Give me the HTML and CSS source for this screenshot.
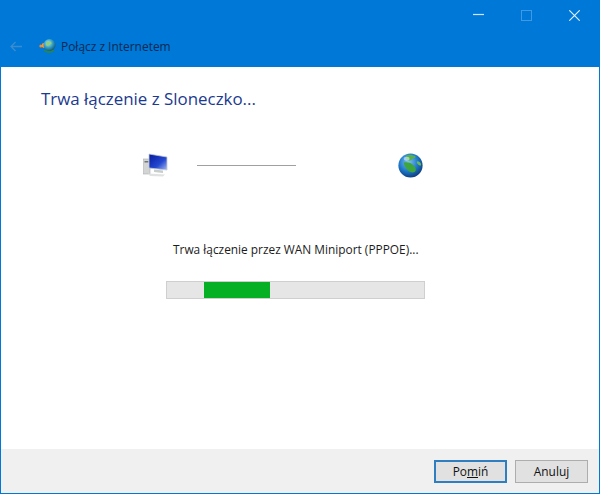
FILE: index.html
```html
<!DOCTYPE html>
<html lang="pl">
<head>
<meta charset="utf-8">
<title>Połącz z Internetem</title>
<link rel="stylesheet" href="styles.css">
</head>
<body>
<div class="window">
  <header class="titlebar">
    <div class="controls">
      <span class="ctl"><svg width="11" height="11" viewBox="0 0 11 11"><path d="M0 4.500H11" stroke="#cfe6f8" stroke-width="1.200"/></svg></span>
      <span class="ctl"><svg width="11" height="11" viewBox="0 0 11 11"><rect x=".5" y=".5" width="10" height="10" fill="none" stroke="#3f9ae3"/></svg></span>
      <span class="ctl"><svg width="11" height="11" viewBox="0 0 11 11"><path d="M.3.3 10.700 10.700M10.700.3.3 10.700" stroke="#e3f1fc" stroke-width="1.100"/></svg></span>
    </div>
    <div class="nav">
      <svg class="back" width="12" height="11" viewBox="0 0 12 11"><path d="M5.500 1 1 5.500 5.500 10M1 5.500H12" fill="none" stroke="#3a8ccf" stroke-width="1.300"/></svg>
      <svg class="appicon" width="17" height="17" viewBox="0 0 17 17">
        <defs><radialGradient id="g1" cx=".4" cy=".35" r=".7"><stop offset="0" stop-color="#a8e4ee"/><stop offset=".55" stop-color="#2f9cc0"/><stop offset="1" stop-color="#14506f"/></radialGradient></defs>
        <circle cx="1.800" cy="8" r="1.500" fill="#f08a2c"/>
        <circle cx="5" cy="7.500" r="2.400" fill="#f59a32"/>
        <circle cx="10.500" cy="7" r="6" fill="url(#g1)"/>
        <path d="M8 4c2-1 4-.5 4.500 1 .3 1.500-2 1-3 2.500-.6 1-2.500.2-2.500-1 0-1 .2-2 1-2.500Z" fill="#8fd07a"/>
        <path d="M5 12.500c3 2 7 2 10-.5" fill="none" stroke="#2f8a35" stroke-width="1.500"/>
      </svg>
      <span class="nav-title">Połącz z Internetem</span>
    </div>
  </header>
  <main class="content">
    <h1 class="heading">Trwa łączenie z Sloneczko...</h1>
    <div class="diagram">
      <svg class="pc" width="26" height="24" viewBox="0 0 26 24">
        <defs><linearGradient id="g2" x1="0" y1="0" x2="1" y2="1"><stop offset="0" stop-color="#061a9c"/><stop offset=".6" stop-color="#2448d0"/><stop offset="1" stop-color="#a9bcf0"/></linearGradient></defs>
        <rect x="0" y="6" width="7" height="15" fill="#d3d5d4" stroke="#a9adac" stroke-width=".6"/>
        <rect x="1.500" y="8" width="4" height="1.500" fill="#6f7573"/>
        <path d="M6 1 24 4V17L6 15Z" fill="url(#g2)" stroke="#c4cad0" stroke-width=".8"/>
        <path d="M11 16.500 20 17.500V20L11 19Z" fill="#c9cdcc"/>
        <path d="M5 20.500 22 21.500 20 23.500 7 23Z" fill="#dfe2e1"/>
      </svg>
      <span class="line"></span>
      <svg class="globe" width="25" height="25" viewBox="0 0 26 26">
        <defs><radialGradient id="g3" cx=".42" cy=".35" r=".72"><stop offset="0" stop-color="#7fc4ee"/><stop offset=".55" stop-color="#1d78c8"/><stop offset="1" stop-color="#0b2f6e"/></radialGradient></defs>
        <circle cx="13" cy="13" r="12.600" fill="url(#g3)"/>
        <path d="M9 2.500c3-1 7-.5 9 1 1 1-1 2.500-3 2.500-1 2-4 2.500-5.500 1.500C8 6.500 8 4 9 2.500Z" fill="#58b04c"/>
        <path d="M6 10c3-1 7 0 9 2 2 2 4 3 3.500 6-1 3-5 2.500-7 1C9 17.500 6 13 6 10Z" fill="#3fa63c"/>
        <path d="M20 8.500c2 0 4 1.500 4 3.500s-2 1-3 0-2-2.500-1-3.500Z" fill="#6cbb56"/>
        <ellipse cx="9" cy="6" rx="3" ry="2" fill="#d8f0fb" opacity=".6"/>
      </svg>
    </div>
    <p class="status">Trwa łączenie przez WAN Miniport (PPPOE)...</p>
    <div class="progress"><div class="progress-fill"></div></div>
  </main>
  <footer class="footer">
    <button class="btn btn-default" type="button">Po<u>m</u>iń</button>
    <button class="btn" type="button">Anuluj</button>
  </footer>
</div>
</body>
</html>
```
FILE: styles.css
```css
html, body { margin: 0; padding: 0; }
body { width: 600px; height: 494px; overflow: hidden; font-family: "Open Sans", "Noto Sans", sans-serif; }
.window { box-sizing: border-box; width: 600px; height: 494px; display: flex; flex-direction: column; border: 1px solid #0078d7; border-top: 0; background: #fff; }
.titlebar { height: 67px; flex: none; background: #0078d7; display: flex; flex-direction: column; }
.controls { display: flex; justify-content: flex-end; padding: 10px 19px 0 0; gap: 37px; height: 21px; }
.ctl { width: 11px; height: 11px; display: block; }
.ctl svg { display: block; }
.nav { display: flex; align-items: center; margin-top: 7px; padding-left: 9px; height: 16px; }
.back { flex: none; }
.appicon { flex: none; margin-left: 17px; }
.nav-title { margin-left: 5px; font-size: 11.950px; color: #0a2a52; line-height: 17px; }
.content { flex: 1; display: flex; flex-direction: column; }
.heading { margin: 20px 0 0 40px; font-weight: 400; font-size: 16.900px; line-height: 24px; color: #1c3a8f; }
.diagram { display: flex; align-items: center; height: 28px; margin-top: 40px; padding-left: 142px; }
.pc { flex: none; }
.line { width: 99px; height: 1px; background: #a0a0a0; margin: 0 102px 0 28px; }
.globe { flex: none; }
.status { margin: 61px 0 0; padding-left: 172px; font-size: 11.880px; line-height: 18px; color: #1c1c1c; }
.progress { box-sizing: border-box; width: 259px; height: 18px; margin: 23px 0 0 165px; background: #e6e6e6; border: 1px solid #cfcfcf; display: flex; padding-left: 37px; }
.progress-fill { width: 66px; background: #06b025; }
.footer { flex: none; box-sizing: border-box; height: 44px; background: #f0f0f0; display: flex; justify-content: flex-end; gap: 8px; padding: 11px 11px 0 0; }
.btn { box-sizing: border-box; width: 73px; height: 23px; padding: 0; background: #e1e1e1; border: 1px solid #adadad; font-family: inherit; font-size: 11.900px; color: #111; line-height: 19px; }
.btn-default { border: 2px solid #2f7fc0; }
```
